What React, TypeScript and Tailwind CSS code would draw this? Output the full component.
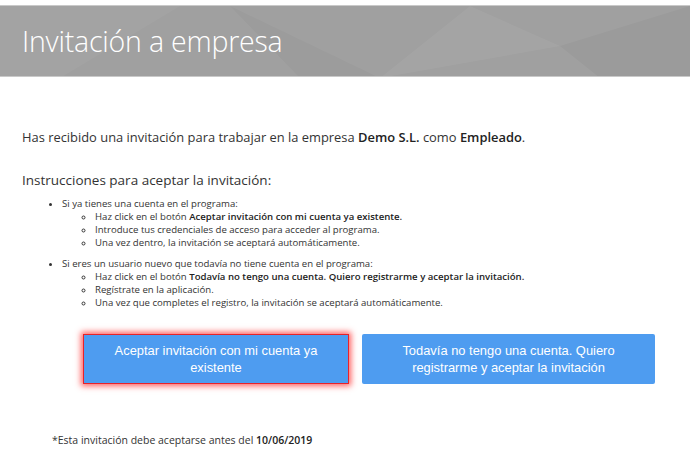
export default function App() {
  return (
    <div className="w-[690px] h-[465px] bg-white font-['Open_Sans',sans-serif] text-[#333] overflow-hidden">
      {/* Header band */}
      <div className="pt-[5px]">
        <div className="relative h-[72px] bg-[#a0a0a0] border-t border-b border-[#c9c9c9] flex items-center pl-[22px] overflow-hidden">
          <svg className="absolute inset-0" width="690" height="72" viewBox="0 0 690 72">
            <polygon points="0,0 180,0 60,72 0,72" fill="#ffffff" opacity="0.04" />
            <polygon points="380,72 470,0 560,40" fill="#ffffff" opacity="0.05" />
            <polygon points="560,40 690,0 690,72 600,72" fill="#000000" opacity="0.03" />
            <polygon points="230,0 380,72 300,72" fill="#000000" opacity="0.025" />
          </svg>
          <h1 className="relative text-white font-light text-[28.5px] leading-none tracking-[-0.2px]">
            Invitación a empresa
          </h1>
        </div>
      </div>

      <div className="pl-[22px]">
        <p className="mt-[51px] text-[12.9px] leading-[18px]">
          Has recibido una invitación para trabajar en la empresa <b className="font-semibold text-[#222]">Demo S.L.</b> como{' '}
          <b className="font-semibold text-[#222]">Empleado</b>.
        </p>

        <p className="mt-[25px] text-[13.5px] leading-[18px]">Instrucciones para aceptar la invitación:</p>

        <ul className="mt-[8px] list-disc pl-[40px] text-[9.6px] leading-[13px]">
          <li>
            Si ya tienes una cuenta en el programa:
            <ul className="list-[circle] pl-[33px]">
              <li>
                Haz click en el botón <b className="font-semibold text-[#222]">Aceptar invitación con mi cuenta ya existente.</b>
              </li>
              <li>Introduce tus credenciales de acceso para acceder al programa.</li>
              <li>Una vez dentro, la invitación se aceptará automáticamente.</li>
            </ul>
          </li>
          <li className="mt-[8px]">
            Si eres un usuario nuevo que todavía no tiene cuenta en el programa:
            <ul className="list-[circle] pl-[33px]">
              <li>
                Haz click en el botón{' '}
                <b className="font-semibold text-[#222]">Todavía no tengo una cuenta. Quiero registrarme y aceptar la invitación.</b>
              </li>
              <li>Regístrate en la aplicación.</li>
              <li>Una vez que completes el registro, la invitación se aceptará automáticamente.</li>
            </ul>
          </li>
        </ul>
      </div>

      {/* Buttons */}
      <div className="mt-[25px] pl-[83px] flex gap-[13px] font-['Liberation_Sans',Arial,sans-serif] text-[12.9px] leading-[17px] text-white">
        <button className="w-[266px] h-[50px] bg-[#4e9cf0] border border-[#e8222a] shadow-[0_0_6px_2px_rgba(255,40,40,0.75)] px-7">
          Aceptar invitación con mi cuenta ya existente
        </button>
        <button className="w-[293px] h-[50px] bg-[#4e9cf0] rounded-[2px] px-9">
          Todavía no tengo una cuenta. Quiero registrarme y aceptar la invitación
        </button>
      </div>

      <p className="mt-[49px] pl-[52px] text-[10.5px] leading-[14px]">
        *Esta invitación debe aceptarse antes del <b className="font-semibold text-[#222]">10/06/2019</b>
      </p>
    </div>
  )
}
